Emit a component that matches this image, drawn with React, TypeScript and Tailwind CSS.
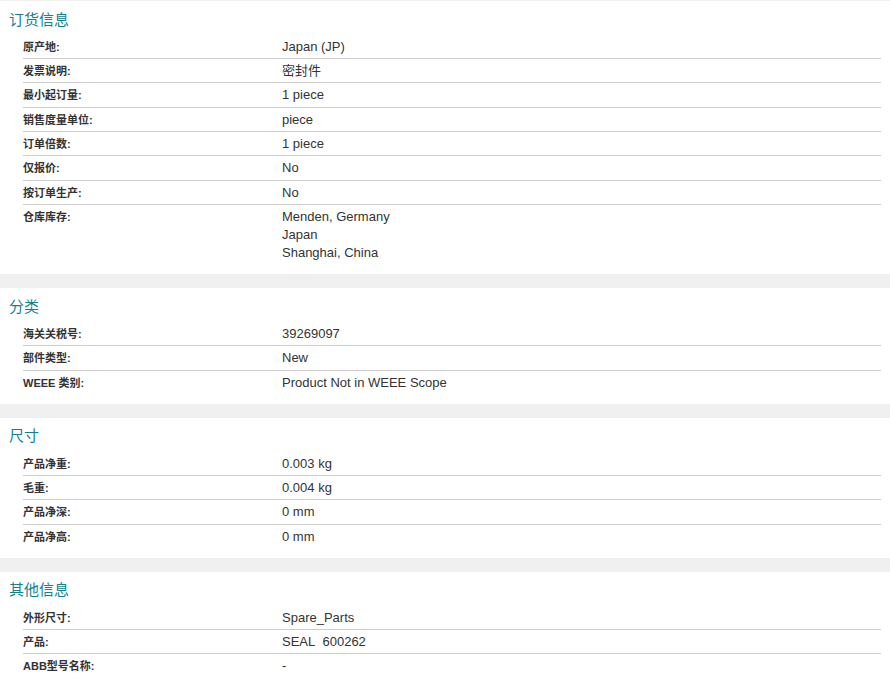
import React from 'react';

type Row = { label: string; value: string[] };
type Section = { title: string; rows: Row[] };

const sections: Section[] = [
  {
    title: '订货信息',
    rows: [
      { label: '原产地:', value: ['Japan (JP)'] },
      { label: '发票说明:', value: ['密封件'] },
      { label: '最小起订量:', value: ['1 piece'] },
      { label: '销售度量单位:', value: ['piece'] },
      { label: '订单倍数:', value: ['1 piece'] },
      { label: '仅报价:', value: ['No'] },
      { label: '按订单生产:', value: ['No'] },
      { label: '仓库库存:', value: ['Menden, Germany', 'Japan', 'Shanghai, China'] },
    ],
  },
  {
    title: '分类',
    rows: [
      { label: '海关关税号:', value: ['39269097'] },
      { label: '部件类型:', value: ['New'] },
      { label: 'WEEE 类别:', value: ['Product Not in WEEE Scope'] },
    ],
  },
  {
    title: '尺寸',
    rows: [
      { label: '产品净重:', value: ['0.003 kg'] },
      { label: '毛重:', value: ['0.004 kg'] },
      { label: '产品净深:', value: ['0 mm'] },
      { label: '产品净高:', value: ['0 mm'] },
    ],
  },
  {
    title: '其他信息',
    rows: [
      { label: '外形尺寸:', value: ['Spare_Parts'] },
      { label: '产品:', value: ['SEAL\u00a0\u00a0600262'] },
      { label: 'ABB型号名称:', value: ['-'] },
    ],
  },
];

const InfoSection: React.FC<{ section: Section }> = ({ section }) => (
  <section className="bg-white pb-[10px]">
    <h2 className="h-[33.67px] pt-[8.5px] pl-[9px] text-[15px] leading-[20px] font-normal text-[#13828f]">
      {section.title}
    </h2>
    <div className="pl-[23px] pr-[9px]">
      {section.rows.map((row, i) => (
        <div
          key={row.label}
          className={`flex pt-[3px] pb-[2.33px] ${i < section.rows.length - 1 ? 'border-b border-[#cccccc]' : ''}`}
        >
          <div className="w-[259px] h-[18px] shrink-0 text-[11px] font-bold leading-[18px] text-[#333333]">
            {row.label}
          </div>
          <div className="flex flex-col text-[13px] leading-[18px] text-[#333333]">
            {row.value.map((v) => (
              <div key={v} className="h-[18px]">
                {v}
              </div>
            ))}
          </div>
        </div>
      ))}
    </div>
  </section>
);

export default function App() {
  return (
    <div
      className="w-[890px] min-h-[687px] bg-[#f0f0f0] pt-px flex flex-col gap-[14px]"
      style={{ fontFamily: '"Liberation Sans", Arial, "Noto Sans CJK SC", sans-serif' }}
    >
      {sections.map((s) => (
        <InfoSection key={s.title} section={s} />
      ))}
    </div>
  );
}
